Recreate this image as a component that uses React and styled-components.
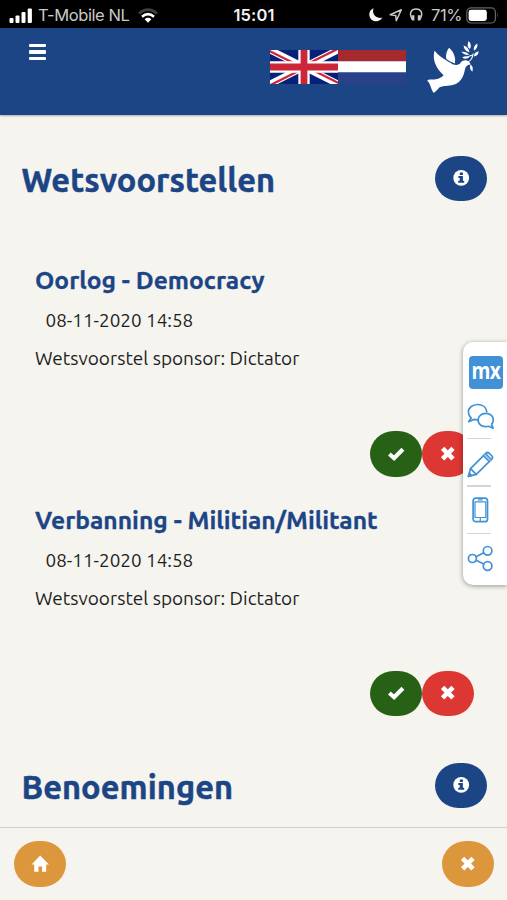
import React from "react";
import styled, { createGlobalStyle } from "styled-components";

const Global = createGlobalStyle`
  *, *::before, *::after { box-sizing: border-box; }
  body { margin: 0; background: #f5f4ef; }
  h1, h2, p { margin: 0; }
  button { font: inherit; }
`;

const navy = "#1c4586";
const mendix = "#4191d6";

const Page = styled.div`
  position: relative;
  display: flex;
  flex-direction: column;
  width: 507px;
  height: 900px;
  overflow: hidden;
  background: #f5f4ef;
  color: #1e1e1e;
  font-family: Ubuntu, "Noto Sans", sans-serif;
`;

const StatusBar = styled.div`
  flex: none;
  display: grid;
  grid-template-columns: 1fr auto 1fr;
  align-items: center;
  height: 28px;
  padding: 2px 8px 0 9px;
  background: #000;
  color: #c9c9c9;
  font-family: Inter, sans-serif;
  font-size: 16.5px;
  line-height: 26px;
  white-space: nowrap;
`;

const StatusGroup = styled.div`
  display: flex;
  align-items: center;
  justify-content: ${(p) => p.$align || "flex-start"};
  svg { flex: none; display: block; }
`;

const Carrier = styled.span`
  margin: 0 8px 0 6px;
  letter-spacing: -0.4px;
`;

const Clock = styled.span`
  color: #f2f2f2;
  font-weight: 600;
  letter-spacing: 0.1px;
`;

const Percent = styled.span`
  margin: 0 4px 0 7px;
  letter-spacing: -0.4px;
`;

const Header = styled.header`
  flex: none;
  display: flex;
  justify-content: space-between;
  align-items: flex-start;
  height: 87px;
  padding: 12px 28px 0 29px;
  background: ${navy};
  box-shadow: 0 1px 2px rgba(0, 0, 0, 0.3);
`;

const MenuButton = styled.button`
  display: flex;
  flex-direction: column;
  gap: 3px;
  width: 17px;
  margin-top: 4px;
  padding: 0;
  border: 0;
  background: none;
`;

const MenuLine = styled.span`
  height: 3.3px;
  border-radius: 1px;
  background: #fff;
`;

const Brand = styled.div`
  display: flex;
  align-items: flex-start;
  svg { display: block; }
`;

const Flags = styled.div`
  display: flex;
  margin: 10px 20px 0 0;
`;

const Main = styled.main`
  flex: 1;
  min-height: 0;
  overflow: hidden;
  padding-top: 40.5px;
`;

const SectionHead = styled.div`
  display: flex;
  justify-content: space-between;
  height: 45.5px;
  padding: 0 20px 0 21.5px;
  margin-top: ${(p) => p.$gap || 0}px;
`;

const SectionTitle = styled.h1`
  margin-top: 4px;
  color: ${navy};
  font-size: 32.6px;
  font-weight: 700;
  line-height: 40px;
  letter-spacing: 0.05px;
  -webkit-text-stroke: 0.5px ${navy};
  white-space: nowrap;
`;

const Proposal = styled.article`
  margin-top: ${(p) => p.$gap}px;
  padding: 0 33.5px 0 35px;
  white-space: nowrap;
`;

const ProposalTitle = styled.h2`
  color: ${navy};
  font-size: 24.6px;
  font-weight: 700;
  line-height: 32px;
  -webkit-text-stroke: 0.3px ${navy};
`;

const ProposalDate = styled.p`
  margin-top: 12px;
  padding-left: 10.5px;
  font-size: 18.9px;
  line-height: 24px;
`;

const Sponsor = styled.p`
  margin-top: 14px;
  font-size: 19px;
  line-height: 24px;
`;

const Actions = styled.div`
  display: flex;
  justify-content: flex-end;
  margin-top: 61px;
`;

const tones = { info: navy, yes: "#276115", no: "#dc3733", nav: "#dc963c" };

const PillButton = styled.button`
  flex: none;
  display: grid;
  place-items: center;
  width: 51.7px;
  height: 45.5px;
  padding: 0;
  border: 0;
  border-radius: 24px / 23px;
  background: ${(p) => tones[p.$tone]};
  color: #fff;
  svg { display: block; }
`;

const Footer = styled.footer`
  flex: none;
  display: flex;
  justify-content: space-between;
  height: 73px;
  padding: 13px 13.5px 0 14px;
  border-top: 1.5px solid #cfcfcd;
`;

const SidePanel = styled.aside`
  position: absolute;
  top: 342px;
  right: 0;
  width: 44.5px;
  height: 243px;
  display: flex;
  flex-direction: column;
  padding: 14px 0 0 4.5px;
  border-radius: 10px 0 0 10px;
  background: #fff;
  box-shadow: 0 1px 5px rgba(0, 0, 0, 0.4);
`;

const MxLogo = styled.div`
  display: flex;
  justify-content: center;
  width: 34px;
  height: 33px;
  margin: 0 0 13.5px 2px;
  border-radius: 4px;
  background: ${mendix};
  color: #fff;
  font-family: "Open Sans", sans-serif;
  font-size: 24px;
  font-weight: 700;
  line-height: 28px;
`;

const MxText = styled.span`
  flex: none;
  letter-spacing: -0.8px;
  transform: scaleX(0.8);
`;

const Tool = styled.div`
  display: grid;
  place-items: center;
  width: 27px;
  height: ${(p) => p.$h}px;
  padding-top: ${(p) => p.$drop || 0}px;
  svg { display: block; }
`;

const Rule = styled.div`
  width: 24px;
  height: 1.5px;
  background: #d5d5d5;
`;

function Signal() {
  return (
    <svg width="23" height="15" viewBox="0 0 23 15" fill="#fff">
      <rect x="0.5" y="10" width="4" height="5" rx="1" />
      <rect x="6.5" y="7.5" width="4" height="7.5" rx="1" />
      <rect x="12.5" y="4" width="4" height="11" rx="1" />
      <rect x="18.7" y="0.5" width="4.2" height="14.5" rx="1" />
    </svg>
  );
}

function Wifi() {
  return (
    <svg width="20" height="15" viewBox="0 0 20 15" fill="none">
      <path d="M1 5.4Q10-2.2 19 5.4" stroke="#3e3e3e" strokeWidth="2.6" />
      <path d="M4 8.7Q10 3.7 16 8.7" stroke="#fff" strokeWidth="2.7" />
      <path d="M6.6 11.2Q10 8.4 13.4 11.2L10 14.8Z" fill="#fff" />
    </svg>
  );
}

function StatusIcons() {
  return (
    <svg width="56" height="16" viewBox="0 0 56 16" fill="none">
      <path d="M5.6 1.2A6.8 6.8 0 1 0 14.2 10.5C9.2 12.4 3.2 7.6 5.6 1.2Z" fill="#f5f5f5" />
      <path d="M22.2 7.8 33.3 2.7 28.3 13.7 27.7 8.4Z" stroke="#c9c9c9" strokeWidth="1.5" strokeLinejoin="round" />
      <path d="M44.3 12.5C40.2 5.5 43.8 2.1 48.1 2.1S56 5.5 51.9 12.5" stroke="#c9c9c9" strokeWidth="1.5" />
      <path d="M43.4 8.3h3v5.2h-2.4zM52.8 8.3h-3v5.2h2.4z" fill="#c9c9c9" />
    </svg>
  );
}

function Battery() {
  return (
    <svg width="33" height="17" viewBox="0 0 33 17" fill="none">
      <rect x="0.8" y="0.8" width="28.6" height="15.2" rx="4.3" stroke="#666" strokeWidth="1.2" />
      <rect x="2.6" y="2.8" width="18.2" height="11.2" rx="2.4" fill="#fff" />
      <path d="M31 5.5Q32.6 8.4 31 11.2Z" fill="#666" />
    </svg>
  );
}

function FlagUK() {
  return (
    <svg width="68" height="34" viewBox="0 0 60 30" preserveAspectRatio="none">
      <defs>
        <clipPath id="uk-frame"><path d="M0 0h60v30H0z" /></clipPath>
        <clipPath id="uk-saltire"><path d="M30 15h30v15zv15H0zH0V0zV0h30z" /></clipPath>
      </defs>
      <g clipPath="url(#uk-frame)">
        <path d="M0 0h60v30H0z" fill="#07207a" />
        <path d="M0 0 60 30M60 0 0 30" stroke="#fff" strokeWidth="6" />
        <path d="M0 0 60 30M60 0 0 30" stroke="#cb2739" strokeWidth="4" clipPath="url(#uk-saltire)" />
        <path d="M30 0v30M0 15h60" stroke="#fff" strokeWidth="10" />
        <path d="M30 0v30M0 15h60" stroke="#cb2739" strokeWidth="6" />
      </g>
    </svg>
  );
}

function FlagNL() {
  return (
    <svg width="68" height="34" viewBox="0 0 68 34">
      <path d="M0 0h68v11.2H0z" fill="#a6292e" />
      <path d="M0 11.2h68v11.4H0z" fill="#fff" />
      <path d="M0 22.6h68V34H0z" fill="#28428a" />
    </svg>
  );
}

function Dove() {
  return (
    <svg width="53" height="54" viewBox="0 0 53 54" fill="#fff">
      <path d="M8.3 11.5C8.5 10.9 9 11 9.3 11.5C13.5 17.2 21 20.5 26.5 24.2C29.8 25.5 33.5 25 34.6 22.8C36 20 40.5 19.2 43.2 22L44.8 24.4C42 24.6 40 25.7 39.2 28.2C38.3 33 37 39 31.5 43C25 46.8 17.8 45 13.3 47.5C10.5 50.5 8.8 53 7.4 52.6C5 49.5 4.5 43 1.2 40.7C2.5 38.4 8 40.4 12.2 38.8C14 38 16.7 36.7 17.6 35.3C10.8 29 6.2 21 8.3 11.5Z" />
      <path d="M23 7.8C26.3 10.3 28.5 14.2 29.2 19.3L28.9 23.4C25.8 22.4 22.7 20.8 20.3 19C19.4 15 20.7 10.8 23 7.8Z" />
      <path d="M41.8 22.2Q46.4 19.8 47.2 13.5M40.5 17.6Q43.5 15.8 46.8 15" fill="none" stroke="#fff" strokeWidth="1.1" />
      <path d="M42.7 1Q46.3 5 43.9 9Q40 6 42.7 1ZM51.2 3.6Q52.3 8 48 10.8Q46.8 6.5 51.2 3.6ZM37.5 5.6Q42.8 7.3 43.5 12.3Q38.4 11.5 37.5 5.6ZM35.3 11.8Q40 11 43.3 14.5Q38.5 16 35.3 11.8ZM52.6 11.3Q52.8 15.7 48 16.5Q47.8 12.3 52.6 11.3ZM36.2 17.4Q40 15.2 43.4 17Q40 20.4 36.2 17.4ZM44.5 24.5Q47.8 26.5 46.4 31.8Q42.9 29.2 44.5 24.5Z" />
    </svg>
  );
}

function InfoIcon() {
  return (
    <svg width="17" height="17" viewBox="0 0 17 17">
      <circle cx="8.2" cy="7.9" r="7.9" fill="#fff" />
      <path d="M6.8 2.6h3.1V5H6.8zM5.4 6.1h4.5v4.7h1.3v2H5.2v-2h1.5V8.1H5.4z" fill={navy} />
    </svg>
  );
}

function CheckIcon() {
  return (
    <svg width="18" height="16" viewBox="0 0 18 16">
      <path d="M2.4 7.9 7.1 12.2 15.9 3.2" fill="none" stroke="#fff" strokeWidth="4.1" />
    </svg>
  );
}

function CrossIcon() {
  return (
    <svg width="16" height="16" viewBox="0 0 16 16">
      <path d="M2.6 2.4 13 12.8M13 2.4 2.6 12.8" stroke="#fff" strokeWidth="4.7" />
    </svg>
  );
}

function HomeIcon() {
  return (
    <svg width="18" height="18" viewBox="0 0 18 18">
      <path d="M9.2 0.6 18 9.4H15.2V16.8H11.1V11.4H7.5V16.8H3.2V9.4H0.6Z" fill="#fff" />
    </svg>
  );
}

const line = { fill: "none", stroke: mendix, strokeWidth: 1.7, strokeLinejoin: "round", strokeLinecap: "round" };

function ChatIcon() {
  return (
    <svg width="28" height="27" viewBox="0 0 28 27" {...line}>
      <path d="M19.8 8.6C18.9 3.9 15 1.3 10.3 1.5C5.2 1.7 1.4 4.8 1.4 8.9C1.4 11.4 2.4 13.2 4.2 14.8L1.7 18.7L7 16.4L10.7 16.8" />
      <path d="M18.7 10.4C23.1 10.4 26.3 13.1 26.3 16.8C26.3 18.7 25.6 20.3 24.5 21.4L26.2 25.2L21.6 23.3C16 24.7 11.1 21.6 11.1 17C11.1 13.2 14.4 10.4 18.7 10.4Z" />
    </svg>
  );
}

function PencilIcon() {
  return (
    <svg width="27" height="27" viewBox="0 0 27 27" {...line}>
      <path d="M1.4 25.4 3.5 17.6 18.8 2.3Q20.5 0.7 22.3 2.3L25 5Q26.2 6.6 24.7 8.2L9.3 23.4Z" />
      <path d="M16.5 4.6 22.2 10.5M18.5 2.6 24.3 8.5M3.5 17.6 9.3 23.4M1.4 25.4 4.6 24.5 2.4 22.2Z" />
      <path d="M18 4 23 9" stroke="#91c0e8" />
    </svg>
  );
}

function PhoneIcon() {
  return (
    <svg width="17" height="26" viewBox="0 0 17 26" {...line}>
      <rect x="1.1" y="1.1" width="14.4" height="23.6" rx="2.8" />
      <path d="M3 4.9H13.8V20.5H3ZM6.3 2.9H10.3M8.3 21.2V24" strokeWidth="1.2" />
    </svg>
  );
}

function ShareIcon() {
  return (
    <svg width="27" height="27" viewBox="0 0 27 27" {...line}>
      <circle cx="5.4" cy="13.5" r="4" />
      <circle cx="20.6" cy="5.8" r="4.3" />
      <circle cx="20.6" cy="21" r="4.3" />
      <path d="M9.1 11.7 16.7 7.8M9.1 15.2 16.7 19" />
    </svg>
  );
}

function ProposalCard({ gap, title }) {
  return (
    <Proposal $gap={gap}>
      <ProposalTitle>{title}</ProposalTitle>
      <ProposalDate>08-11-2020 14:58</ProposalDate>
      <Sponsor>Wetsvoorstel sponsor: Dictator</Sponsor>
      <Actions>
        <PillButton $tone="yes" aria-label="Voor"><CheckIcon /></PillButton>
        <PillButton $tone="no" aria-label="Tegen"><CrossIcon /></PillButton>
      </Actions>
    </Proposal>
  );
}

export default function App() {
  return (
    <>
      <Global />
      <Page>
        <StatusBar>
          <StatusGroup>
            <Signal />
            <Carrier>T-Mobile NL</Carrier>
            <Wifi />
          </StatusGroup>
          <Clock>15:01</Clock>
          <StatusGroup $align="flex-end">
            <StatusIcons />
            <Percent>71%</Percent>
            <Battery />
          </StatusGroup>
        </StatusBar>
        <Header>
          <MenuButton aria-label="Menu">
            <MenuLine />
            <MenuLine />
            <MenuLine />
          </MenuButton>
          <Brand>
            <Flags>
              <FlagUK />
              <FlagNL />
            </Flags>
            <Dove />
          </Brand>
        </Header>
        <Main>
          <SectionHead>
            <SectionTitle>Wetsvoorstellen</SectionTitle>
            <PillButton $tone="info" aria-label="Info"><InfoIcon /></PillButton>
          </SectionHead>
          <ProposalCard gap={63} title="Oorlog - Democracy" />
          <ProposalCard gap={27} title="Verbanning - Militian/Militant" />
          <SectionHead $gap={46.5}>
            <SectionTitle>Benoemingen</SectionTitle>
            <PillButton $tone="info" aria-label="Info"><InfoIcon /></PillButton>
          </SectionHead>
        </Main>
        <Footer>
          <PillButton $tone="nav" aria-label="Home"><HomeIcon /></PillButton>
          <PillButton $tone="nav" aria-label="Sluiten"><CrossIcon /></PillButton>
        </Footer>
        <SidePanel>
          <MxLogo><MxText>mx</MxText></MxLogo>
          <Tool $h={28}><ChatIcon /></Tool>
          <Tool $h={7} />
          <Rule />
          <Tool $h={46} $drop={4}><PencilIcon /></Tool>
          <Rule />
          <Tool $h={46} $drop={1}><PhoneIcon /></Tool>
          <Rule />
          <Tool $h={48}><ShareIcon /></Tool>
        </SidePanel>
      </Page>
    </>
  );
}
